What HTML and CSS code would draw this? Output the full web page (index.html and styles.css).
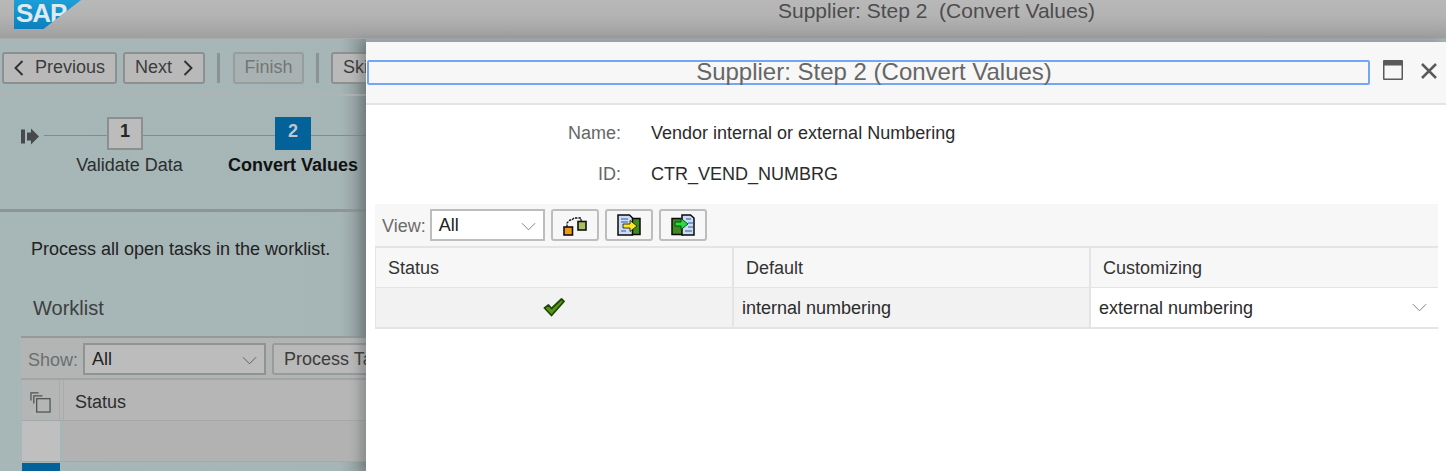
FILE: index.html
```html
<!DOCTYPE html>
<html lang="en">
<head>
<meta charset="utf-8">
<title>Supplier: Step 2 (Convert Values)</title>
<link rel="stylesheet" href="styles.css">
</head>
<body>
<div class="page">
  <header class="shell">
    <div class="logo"><span class="logo-text">SAP</span></div>
    <div class="shell-title">Supplier: Step 2&nbsp; (Convert Values)</div>
  </header>
  <div class="toolbar">
    <button class="btn btn-prev"><svg class="chev" viewBox="0 0 10 16"><path d="M8.500 1 1.500 8l7 7"/></svg>Previous</button>
    <button class="btn btn-next">Next<svg class="chev" viewBox="0 0 10 16"><path d="M1.500 1l7 7-7 7"/></svg></button>
    <span class="sep"></span>
    <button class="btn btn-finish">Finish</button>
    <span class="sep"></span>
    <button class="btn btn-skip">Skip</button>
  </div>
  <div class="stepper">
    <svg class="start" viewBox="0 0 20 16"><path d="M0 1h4v14H0zM6 4h4V0l8 8-8 8v-4H6z"/></svg>
    <div class="step step-one">
      <div class="step-box">1</div>
      <div class="step-label">Validate Data</div>
    </div>
    <div class="step step-two">
      <div class="step-box step-box-on">2</div>
      <div class="step-label step-label-on">Convert Values</div>
    </div>
  </div>
  <main class="content">
    <p class="intro">Process all open tasks in the worklist.</p>
    <h2 class="section">Worklist</h2>
    <div class="wl-bar">
      <span class="muted">Show:</span>
      <div class="select select-show"><span>All</span><svg class="caret" viewBox="0 0 16 9"><path d="M1 1l7 7 7-7"/></svg></div>
      <button class="btn btn-task">Process Tasks</button>
    </div>
    <div class="wl-head">
      <div class="wl-corner"><svg viewBox="0 0 22 22"><path d="M1 9V1h8M4 12V4h9"/><rect x="7" y="7" width="14" height="14"/></svg></div>
      <div class="wl-status">Status</div>
    </div>
    <div class="wl-row">
      <div class="wl-mark"></div>
      <div class="wl-cell"></div>
    </div>
    <div class="wl-row-next">
      <div class="wl-mark-on"></div>
    </div>
  </main>
</div>

<section class="modal">
  <div class="modal-head">
    <div class="modal-title">Supplier: Step 2 (Convert Values)</div>
    <svg class="maxi" viewBox="0 0 20 20"><path d="M0 1a1 1 0 0 1 1-1h18a1 1 0 0 1 1 1v18a1 1 0 0 1-1 1H1a1 1 0 0 1-1-1zm1.500 4.500V18.500h17V5.500z"/></svg>
    <svg class="close" viewBox="0 0 16 16"><path d="M1 1l14 14M15 1 1 15"/></svg>
  </div>
  <div class="fields">
    <div class="field"><span class="field-label">Name:</span><span>Vendor internal or external Numbering</span></div>
    <div class="field"><span class="field-label">ID:</span><span>CTR_VEND_NUMBRG</span></div>
  </div>
  <div class="view-area">
    <div class="view-bar">
      <span class="muted">View:</span>
      <div class="select select-view"><span>All</span><svg class="caret" viewBox="0 0 16 9"><path d="M1 1l7 7 7-7"/></svg></div>
      <button class="icon-btn">
        <svg viewBox="0 0 24 22" class="tool">
          <path d="M4 13V9l3-3h2l2-2h7v3" fill="none" stroke="#111" stroke-width="1.300" stroke-dasharray="2.500 1"/>
          <rect x="1" y="13" width="8.500" height="8" fill="#f09a12" stroke="#111" stroke-width="1.600"/>
          <rect x="15" y="7.500" width="8" height="8.500" fill="#a9bf62" stroke="#111" stroke-width="1.600"/>
        </svg>
      </button>
      <button class="icon-btn">
        <svg viewBox="0 0 24 22" class="tool">
          <path d="M14 4.500h9v16H14z" fill="#3f8a1e" stroke="#0b0b0b" stroke-width="1.500"/>
          <path d="M1 1h11.500l3 3v17H1z" fill="#cddcf2" stroke="#0b0b0b" stroke-width="1.500"/>
          <path d="M4 5h7M4 8h7M4 17h5" stroke="#5f86bd" stroke-width="1.300"/>
          <path d="M6 10h7V6.500l7 5.500-7 5.500V14H6z" fill="#ffe81a" stroke="#222" stroke-width=".9"/>
        </svg>
      </button>
      <button class="icon-btn">
        <svg viewBox="0 0 24 22" class="tool">
          <path d="M1 4.500h11v16H1z" fill="#3f8a1e" stroke="#0b0b0b" stroke-width="1.500"/>
          <path d="M11 1h8.500l3.500 3v17H11z" fill="#cddcf2" stroke="#0b0b0b" stroke-width="1.500"/>
          <path d="M15 5h5M17 9h5M17 13h5M14 17h7" stroke="#5f86bd" stroke-width="1.300"/>
          <path d="M4 8h6V4.500l7 5.500-7 5.500V12H4z" fill="#22e03c" stroke="#0d3a18" stroke-width=".9"/>
        </svg>
      </button>
    </div>
    <div class="grid">
      <div class="grid-h">Status</div>
      <div class="grid-h">Default</div>
      <div class="grid-h">Customizing</div>
      <div class="grid-c grid-check">
        <svg class="check" viewBox="0 0 22 19"><path d="M1.500 10 5.500 7l3 3.500L18.500 1l2.500 2.500L8.500 17.500z" fill="#4f9a10" stroke="#24440a" stroke-width="1.800" stroke-linejoin="round"/></svg>
      </div>
      <div class="grid-c">internal numbering</div>
      <div class="grid-c grid-input"><span>external numbering</span><svg class="caret" viewBox="0 0 16 9"><path d="M1 1l7 7 7-7"/></svg></div>
    </div>
  </div>
</section>
</body>
</html>
```

FILE: styles.css
```css
* { box-sizing: border-box; }
html, body { margin: 0; height: 471px; overflow: hidden; }
body {
  position: relative;
  font-family: "Liberation Sans", Arial, sans-serif;
  font-size: 18px;
  color: #222;
  background: #a6b5b6;
}
button { font: inherit; margin: 0; }
.page { width: 366px; height: 471px; overflow: hidden; background: linear-gradient(90deg, #a7b6b7 0, #a6b5b6 340px, #8f9a9b 366px); }

.shell {
  position: absolute; left: 0; top: 0; width: 1446px; height: 39px;
  background: linear-gradient(#b8b8b8 0, #b4b4b4 15px, #9f9f9f 38px);
  border-bottom: 1px solid #a8acac;
  overflow: hidden;
}
.logo {
  position: absolute; left: 14px; top: 0; width: 67px; height: 29px;
  background: linear-gradient(#1c9fd8, #0b80bd);
  clip-path: polygon(0 0, 100% 0, 44% 100%, 0 100%);
  overflow: hidden;
}
.logo-text {
  position: absolute; left: 2px; top: -2px;
  font-weight: bold; font-size: 26px; line-height: 30px; letter-spacing: -1px; color: #dfe9ee;
}
.shell-title { position: absolute; left: 778px; top: 0; line-height: 22px; font-size: 21px; color: #4d4d4d; white-space: pre; }

.toolbar {
  position: absolute; left: 0; top: 39px; width: 366px; height: 57px;
  display: flex; align-items: center; gap: 6px;
  padding: 0 0 0 2px;
  border-bottom: 2px solid #aeb3b3;
  overflow: hidden;
}
.btn {
  height: 32px; padding: 0 10px; flex: none;
  display: inline-flex; align-items: center; gap: 11px;
  background: #b9b9b9; color: #3c3c3c;
  border: 2px solid #8d9090; border-radius: 3px;
  font-size: 18px; position: relative; top: 1px;
}
.btn-finish { width: 71px; justify-content: center; padding: 0; color: #737676; background: #a9b2b2; border-color: #959d9d; margin-left: 7px; }
.btn-prev { width: 115px; }
.btn-next { width: 82px; }
.btn-skip { width: 60px; padding: 0 10px; justify-content: flex-start; margin-left: 6px; }
.chev { width: 10px; height: 16px; fill: none; stroke: #2f2f2f; stroke-width: 1.900; flex: none; }
.sep { width: 3px; height: 30px; background: #8a9292; flex: none; margin-left: 6px; position: relative; top: 1px; }

.stepper {
  position: absolute; left: 0; top: 96px; width: 366px; height: 116px;
  border-bottom: 3px solid #8d9697;
}
.stepper::before {
  content: ""; position: absolute; left: 44px; right: 0; top: 39px; height: 1px; background: #838b8b;
}
.start { position: absolute; left: 21px; top: 32px; width: 20px; height: 17px; fill: #474a4a; }
.step { position: absolute; top: 21px; display: flex; flex-direction: column; align-items: center; }
.step-one { left: 60px; width: 138px; }
.step-two { left: 223px; width: 140px; }
.step-box {
  width: 36px; height: 33px; padding-bottom: 4px; display: flex; align-items: center; justify-content: center;
  background: #bcbcbc; border: 2px solid #8b8f8f; font-weight: bold; font-size: 18px; color: #262626; position: relative;
}
.step-one .step-box { margin-left: -8px; }
.step-box-on { background: #03629a; border: 0; color: #bfc6ca; }
.step-label { margin-top: 4px; line-height: 22px; color: #2c2e2e; white-space: nowrap; }
.step-one .step-label { margin-left: 1px; }
.step-label-on { font-weight: bold; color: #111; }

.content { position: absolute; left: 0; top: 212px; width: 366px; height: 259px; overflow: hidden; }
.intro { margin: 26px 0 0 31px; line-height: 22px; color: #222; }
.section { margin: 36px 0 0 33px; font-weight: normal; font-size: 20px; line-height: 24px; color: #3d4040; }
.muted { color: #6b6f6f; position: relative; top: 1px; }
.wl-bar {
  margin: 16px 0 0 21px; height: 44px; width: 345px;
  background: #b3b5b5; border-top: 2px solid #949a9a; border-bottom: 2px solid #a1a5a5;
  display: flex; align-items: center; gap: 6px; padding: 2px 0 0 7px; overflow: hidden;
}
.wl-bar .btn { top: 0; flex: none; margin-left: 0; width: 150px; padding: 0 10px; justify-content: flex-start; border-color: #979b9b; }
.select {
  height: 32px; background: #fff; border: 2px solid #bdbdbd; padding: 0 7px;
  display: flex; align-items: center; justify-content: space-between; flex: none; color: #222;
}
.select-show { width: 183px; margin-left: -1px; background: #bcbcbc; border-color: #8f9393; }
.select-view { width: 115px; margin-left: -2px; }
.caret { width: 15px; height: 9px; fill: none; stroke: #7a7a7a; stroke-width: 1; flex: none; }
.select .caret { position: relative; top: 1px; }
.select-show .caret { stroke: #585c5c; }

.wl-head, .wl-row { margin-left: 22px; width: 344px; display: flex; }
.wl-head { height: 41px; border-bottom: 1px solid #a5a8a8; background: #b6b6b6; }
.wl-corner { width: 38px; height: 40px; padding-top: 4px; border-right: 1px solid #a9abab; display: flex; align-items: center; justify-content: center; background: #b4b6b6; }
.wl-corner svg { width: 21px; height: 21px; fill: none; stroke: #4f5252; stroke-width: 1.300; }
.wl-status { flex: 1; margin-left: 3px; padding: 2px 0 0 11px; line-height: 40px; color: #2c2e2e; border-left: 1px solid #a9abab; }
.wl-row { height: 41px; border-bottom: 1px solid #a5a8a8; }
.wl-mark { width: 38px; background: #bfbfbf; }
.wl-cell { flex: 1; margin-left: 3px; background: #b2b2b2; }
.wl-row-next { margin: 1px 0 0 22px; height: 10px; }
.wl-mark-on { width: 38px; height: 10px; background: #03629a; }

.modal {
  position: absolute; left: 366px; top: 42px; width: 1080px; height: 429px;
  background: #fff;
  box-shadow: -6px 0 10px rgba(60, 70, 70, .35);
}
.modal-head {
  height: 63px; background: #f7f7f7; border-bottom: 2px solid #e4e4e4;
  display: flex; align-items: flex-start; padding: 18px 0 0 1px;
}
.modal-title {
  width: 1003px; height: 25px; border: 2px solid #73a6f4; border-radius: 2px; padding-left: 11px;
  text-align: center; font-size: 24px; line-height: 19px; color: #666; white-space: nowrap;
}
.maxi { width: 20px; height: 20px; margin: 0 0 0 13px; fill: #5a5a5a; flex: none; }
.close { width: 16px; height: 16px; margin: 3px 0 0 18px; fill: none; stroke: #5a5a5a; stroke-width: 2.500; flex: none; }

.fields { padding-top: 8px; }
.field { display: flex; height: 41px; line-height: 41px; gap: 30px; color: #2b2b2b; }
.field-label { width: 255px; text-align: right; color: #666; }

.view-area { margin: 9px 8px 0 9px; }
.view-bar {
  height: 44px; background: #f7f7f7; display: flex; align-items: center; gap: 6px; padding: 0 0 0 7px;
  border-bottom: 2px solid #e4e4e4;
}
.view-bar .muted { color: #6b6b6b; }
.icon-btn {
  width: 48px; height: 32px; background: #f7f7f7; border: 2px solid #bdbdbd; border-radius: 3px;
  display: flex; align-items: center; justify-content: center; padding: 0; flex: none;
}
.tool { width: 24px; height: 22px; display: block; }
.grid {
  display: grid; grid-template-columns: 358px 357px 347px; height: 81px;
  grid-template-rows: 40px 39px;
  border-bottom: 2px solid #e4e4e4; border-left: 1px solid #e4e4e4; border-right: 2px solid #e4e4e4;
}
.grid-h { background: #f7f7f7; border-bottom: 1px solid #e4e4e4; border-right: 2px solid #e4e4e4; padding-left: 12px; line-height: 40px; color: #333; }
.grid-c { background: #f2f2f2; padding-left: 8px; line-height: 40px; border-right: 2px solid #e4e4e4; color: #2b2b2b; }
.grid-h:nth-child(3), .grid-c:last-child { border-right: 0; }
.grid-check { display: flex; align-items: center; justify-content: center; padding: 0; }
.check { width: 22px; height: 19px; }
.grid-input { background: #fff; display: flex; align-items: center; justify-content: space-between; padding-right: 11px; }
```
